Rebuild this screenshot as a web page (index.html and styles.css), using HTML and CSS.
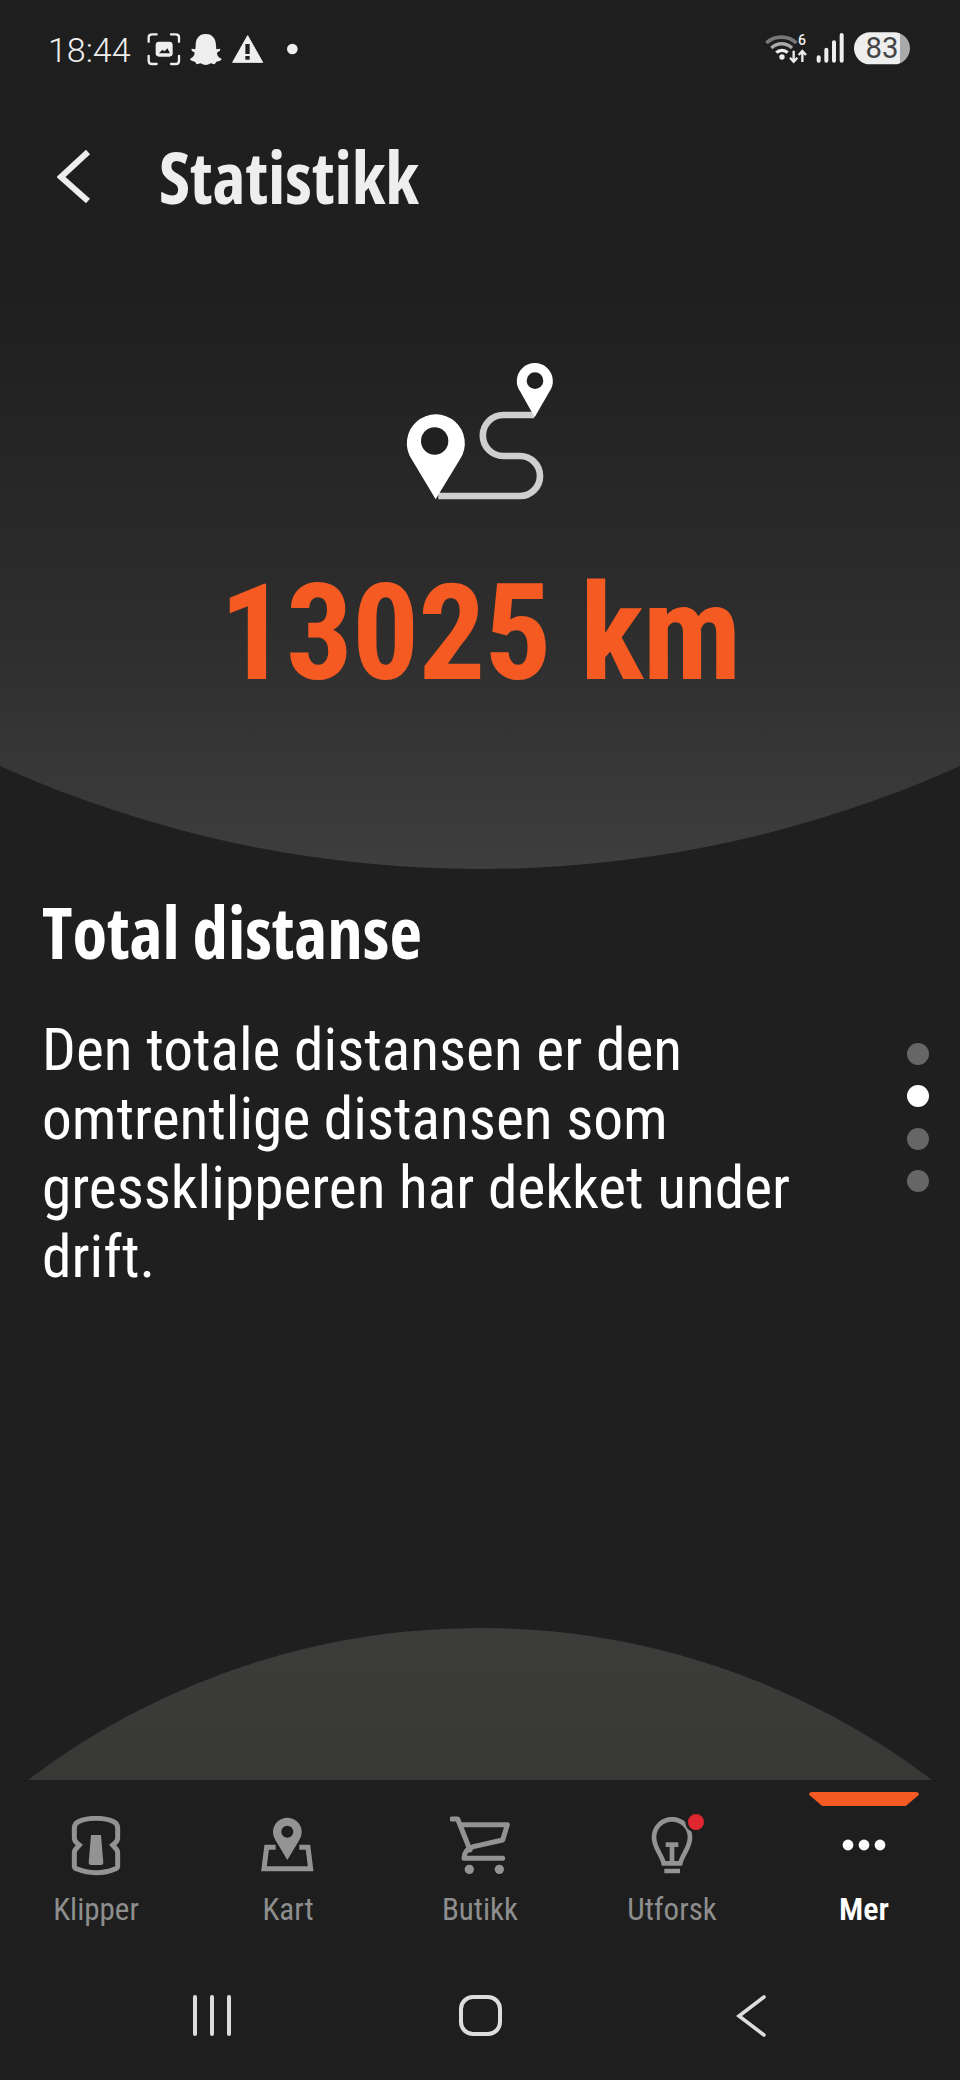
FILE: index.html
```html
<!DOCTYPE html>
<html lang="no">
<head>
<meta charset="utf-8">
<title>Statistikk</title>
<link rel="stylesheet" href="styles.css">
</head>
<body>
<div class="app">
  <section class="hero">
    <div class="status">
      <span class="time">18:44</span>
      <svg class="status-icons" viewBox="0 0 480 180" width="160" height="60">
        <g fill="none" stroke="#eee" stroke-width="7" stroke-linecap="round">
          <path d="M26 65V52Q26 43 37 43H50M93 43H107Q117 43 117 52V65M117 108V122Q117 132 107 132H93M50 132H37Q26 132 26 122V108"/>
        </g>
        <rect x="47" y="65" width="51" height="45" rx="10" fill="#eee"/>
        <path d="M57 100L67 89L74 94L82 85L90 100Z" fill="#1e1e1e"/>
        <path d="M197 42C172 42 167 62 167 78L166 88L155 86Q152 92 163 97C166 105 158 113 150 117Q152 124 165 125L170 133L182 130Q197 140 212 130L224 133L229 125Q243 124 245 117C236 113 229 105 232 97Q243 92 240 86L229 88L228 78C228 62 222 42 197 42Z" fill="#eee"/>
        <path d="M323 47L368 127H278Z" fill="#eee" stroke="#eee" stroke-width="3" stroke-linejoin="round"/>
        <rect x="316" y="72" width="13" height="30" fill="#1e1e1e"/>
        <rect x="316" y="108" width="13" height="11" fill="#1e1e1e"/>
        <circle cx="457" cy="87" r="16" fill="#eee"/>
      </svg>
      <svg class="status-right" viewBox="0 0 780 300" width="260" height="100">
        <defs>
          <linearGradient id="batt" x1="0" x2="1" y1="0" y2="0">
            <stop offset="0.83" stop-color="#eee"/>
            <stop offset="0.83" stop-color="#a9a9a9"/>
          </linearGradient>
        </defs>
        <g fill="none" stroke-linecap="butt">
          <path d="M199 129A66 66 0 0 1 289 129" stroke="#777" stroke-width="11"/>
          <path d="M214 144A44 44 0 0 1 276 144" stroke="#aaa" stroke-width="10"/>
          <path d="M229 158A24 24 0 0 1 263 158" stroke="#eee" stroke-width="10"/>
        </g>
        <circle cx="246" cy="171" r="8" fill="#eee"/>
        <text class="wifi-num" x="306" y="136">6</text>
        <path d="M281 152V184M270 173L281 185L292 173M307 186V154M296 165L307 153L318 165" fill="none" stroke="#eee" stroke-width="7"/>
        <g fill="none" stroke="#eee" stroke-width="12" stroke-linecap="round">
          <path d="M356 172V182M379 149V182M402 127V182M425 105V182"/>
        </g>
        <rect x="462" y="97" width="168" height="96" rx="48" fill="url(#batt)"/>
        <text class="batt-num" x="546" y="173">83</text>
      </svg>
    </div>
    <header class="bar">
      <svg class="back" viewBox="0 0 36 60" width="36" height="60">
        <path d="M31 5L4 30L31 54" fill="none" stroke="#eee" stroke-width="6" stroke-linejoin="miter"/>
      </svg>
      <h1 class="title">Statistikk</h1>
    </header>
    <svg class="route" viewBox="0 0 840 720" width="280" height="240">
      <path d="M582 315H490A61 61 0 0 0 490 438H540A60 60 0 0 1 540 558H295" fill="none" stroke="#cfcfcf" stroke-width="20"/>
      <path d="M287 568L215 448A87 87 0 1 1 360 448Z" fill="#fff"/>
      <circle cx="284" cy="393" r="41" fill="#202020"/>
      <path d="M584 322L541 245A54 54 0 1 1 628 245Z" fill="#fff"/>
      <circle cx="585" cy="212" r="25" fill="#202020"/>
    </svg>
    <div class="value">13025 km</div>
  </section>

  <main class="content">
    <div class="text">
      <h2 class="heading">Total distanse</h2>
      <p class="body">Den totale distansen er den omtrentlige distansen som gressklipperen har dekket under drift.</p>
    </div>
    <div class="pager">
      <span class="dot"></span>
      <span class="dot on"></span>
      <span class="dot"></span>
      <span class="dot"></span>
    </div>
  </main>

  <div class="dome"></div>

  <nav class="tabs">
    <a class="tab">
      <svg viewBox="78 78 180 180" width="60" height="60">
        <path d="M168 85C195 85 215 90 228 100Q233 106 233 115V145Q233 152 224 160L218 165L224 172Q233 180 233 188V228Q233 236 222 238C205 245 190 248 168 248C146 248 130 245 114 238Q103 236 103 228V188Q103 180 112 172L118 165L112 160Q103 152 103 145V115Q103 106 108 100C121 90 141 85 168 85Z" fill="none" stroke="#939393" stroke-width="15"/>
        <path d="M153 135H183L190 218Q190 225 183 225H153Q146 225 146 218Z" fill="#939393"/>
      </svg>
      <span>Klipper</span>
    </a>
    <a class="tab">
      <svg viewBox="654 78 180 180" width="60" height="60">
        <path d="M707 172H680L672 236H812L804 172H778" fill="none" stroke="#939393" stroke-width="15"/>
        <path d="M742 210L706 150A43 43 0 1 1 778 150Z" fill="#939393"/>
        <circle cx="742" cy="125" r="18" fill="#1e1e1e"/>
      </svg>
      <span>Kart</span>
    </a>
    <a class="tab">
      <svg viewBox="90 78 180 180" width="60" height="60">
        <path d="M95 87H113L150 180M122 104H262L248 150L160 170Q132 178 132 205H248" fill="none" stroke="#939393" stroke-width="15" stroke-linecap="round" stroke-linejoin="round"/>
        <circle cx="148" cy="238" r="14" fill="#939393"/>
        <circle cx="238" cy="238" r="14" fill="#939393"/>
      </svg>
      <span>Butikk</span>
    </a>
    <a class="tab">
      <svg class="bulb" viewBox="666 78 180 180" width="60" height="60">
        <path d="M731 220C725 192 702 175 702 142A54 54 0 1 1 810 142C810 175 787 192 781 220Z" fill="none" stroke="#939393" stroke-width="14"/>
        <path d="M737 164H775M756 164V218M733 243H780" fill="none" stroke="#939393" stroke-width="14"/>
        <circle cx="828" cy="96" r="28" fill="#e0262f" stroke="#1e1e1e" stroke-width="8"/>
      </svg>
      <span>Utforsk</span>
    </a>
    <a class="tab active">
      <i class="marker"></i>
      <svg viewBox="0 0 60 60" width="60" height="60">
        <circle cx="14" cy="29" r="5.4" fill="#fff"/>
        <circle cx="30" cy="29" r="5.4" fill="#fff"/>
        <circle cx="46" cy="29" r="5.4" fill="#fff"/>
      </svg>
      <span>Mer</span>
    </a>
  </nav>

  <div class="sysnav">
    <span class="recents"><i></i><i></i><i></i></span>
    <span class="home"></span>
    <svg class="sysback" viewBox="0 0 30 44" width="30" height="44">
      <path d="M28 3L3 22L28 41" fill="none" stroke="#ddd" stroke-width="3.6" stroke-linecap="round"/>
    </svg>
  </div>
</div>
</body>
</html>
```

FILE: styles.css
```css
* { box-sizing: border-box; }
html, body { margin: 0; padding: 0; background: #1e1e1e; }
body { font-family: Roboto, sans-serif; font-stretch: 75%; color: #fff; }
.app { width: 960px; height: 2080px; display: flex; flex-direction: column; overflow: hidden; background: #201f20; }

.hero {
  flex: none;
  height: 869px;
  display: flex;
  flex-direction: column;
  align-items: center;
  background: linear-gradient(180deg, #1e1e1e 0, #1f1f1f 300px, #2e2e2e 640px, #3e3e3e 869px);
  clip-path: circle(1170px at 50% -301px);
}
.status { width: 100%; height: 100px; display: flex; align-items: center; padding-left: 48px; }
.time { font-stretch: 100%; font-weight: 300; font-size: 34px; line-height: 96px; color: #eee; width: 92px; }
.status-right { margin-left: auto; }
.wifi-num { font-stretch: 100%; font-weight: 500; font-size: 42px; fill: #eee; text-anchor: middle; }
.batt-num { font-stretch: 100%; font-weight: 400; font-size: 88px; fill: #444; text-anchor: middle; }

.bar { width: 100%; height: 154px; display: flex; align-items: center; padding-left: 57px; }
.back { flex: none; }
.title { margin: -2px 0 0 66px; font-family: "Open Sans", sans-serif; font-size: 71px; line-height: 1; font-weight: 700; color: #eee; }
.route { flex: none; margin-top: 56px; }
.value { margin-top: 9px; font-size: 133px; line-height: 150px; font-weight: 700; letter-spacing: -1px; color: #f55a22; }

.content { flex: 1; display: flex; padding: 25px 31px 0 42px; }
.text { flex: 1; }
.heading { margin: 0; font-family: "Open Sans", sans-serif; font-size: 71px; line-height: 76px; font-weight: 700; color: #fff; }
.body { margin: 46px 0 0; width: 800px; font-size: 59.4px; line-height: 69px; font-weight: 400; color: #fff; }
.pager { flex: none; width: 22px; display: flex; flex-direction: column; gap: 20.4px; padding-top: 149px; }
.dot { width: 22px; height: 22px; border-radius: 50%; background: #666; }
.dot.on { background: #fff; }

.dome {
  flex: none;
  height: 152px;
  background: linear-gradient(180deg, #3c3c3b 0, #383837 100%);
  clip-path: circle(748px at 50% 748px);
}

.tabs { flex: none; height: 180px; display: grid; grid-template-columns: repeat(5, 1fr); background: #1e1e1e; }
.tab { position: relative; display: flex; flex-direction: column; align-items: center; padding-top: 36px; font-size: 31px; line-height: 40px; color: #8e8e8e; }
.tab span { margin-top: 14px; }
.tab.active { color: #fff; font-weight: 600; font-size: 32px; font-stretch: 85%; }
.tab.active span { margin-top: 13px; }
.bulb { overflow: visible; }
.marker {
  position: absolute; top: 12px; left: 41px; width: 110px; height: 14px;
  background: #f55a22;
  clip-path: polygon(0 0, 100% 0, 100% 20%, 88% 100%, 12% 100%, 0 20%);
  border-radius: 3px 3px 0 0;
}

.sysnav { flex: none; height: 120px; display: flex; background: #1e1e1e; align-items: center; padding-bottom: 9px; }
.recents { display: flex; gap: 13px; margin-left: 193px; }
.recents i { display: block; width: 4px; height: 41px; border-radius: 2px; background: #ddd; }
.home { width: 43px; height: 41px; margin-left: 228px; border: 4px solid #ddd; border-radius: 14px; }
.sysback { margin-left: 234px; }
```
